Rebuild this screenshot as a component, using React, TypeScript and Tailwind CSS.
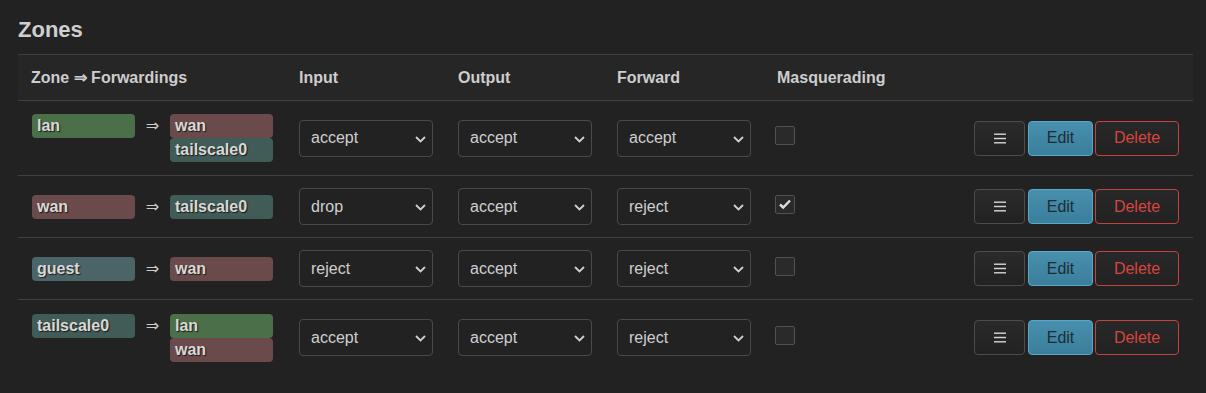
import React from 'react';

type Zone = { name: string };

const badgeColors: Record<string, string> = {
    lan: 'bg-[#4b6f49]',
    wan: 'bg-[#6a4a4a]',
    tailscale0: 'bg-[#415b56]',
    guest: 'bg-[#4a6468]',
};

interface Row {
    zone: string;
    forwards: string[];
    input: string;
    output: string;
    forward: string;
    masq: boolean;
    height: string;
}

const rows: Row[] = [
    { zone: 'lan', forwards: ['wan', 'tailscale0'], input: 'accept', output: 'accept', forward: 'accept', masq: false, height: 'h-[75px]' },
    { zone: 'wan', forwards: ['tailscale0'], input: 'drop', output: 'accept', forward: 'reject', masq: true, height: 'h-[62px]' },
    { zone: 'guest', forwards: ['wan'], input: 'reject', output: 'accept', forward: 'reject', masq: false, height: 'h-[62px]' },
    { zone: 'tailscale0', forwards: ['lan', 'wan'], input: 'accept', output: 'accept', forward: 'reject', masq: false, height: 'h-[75px]' },
];

function Badge({ name }: Zone) {
    return (
        <div
            className={`${badgeColors[name]} w-[103px] h-[24px] rounded-[4px] pl-[5px] text-[16px] leading-[24px] font-bold text-[#d8d8d8] [text-shadow:1px_1px_1px_#1a1a1a]`}
        >
            {name}
        </div>
    );
}

function Select({ value }: { value: string }) {
    return (
        <div className="relative w-[134px] h-[37px]">
            <select
                defaultValue={value}
                className="appearance-none w-full h-full bg-[#222] border border-[#4a4a4a] rounded-[4px] pl-[11px] text-[16px] text-[#cfcfcf] outline-none"
            >
                <option value="accept">accept</option>
                <option value="reject">reject</option>
                <option value="drop">drop</option>
            </select>
            <svg
                className="absolute right-[7px] top-[16px] pointer-events-none"
                width="11"
                height="7"
                viewBox="0 0 11 7"
                fill="none"
            >
                <path d="M1 1l4.5 4.5L10 1" stroke="#cfcfcf" strokeWidth="1.8" />
            </svg>
        </div>
    );
}

function Checkbox({ checked }: { checked: boolean }) {
    return (
        <div className="-ml-[2px] mb-[5px] w-[20px] h-[19px] rounded-[2px] border border-[#525252] bg-[#2a2a2a] flex items-center justify-center">
            {checked && (
                <svg width="14" height="12" viewBox="0 0 14 12" fill="none">
                    <path d="M2 6.5l3.2 3L12 2.5" stroke="#dedede" strokeWidth="2.4" />
                </svg>
            )}
        </div>
    );
}

function Actions() {
    return (
        <div className="flex items-center pr-[14px]">
            <button
                type="button"
                className="w-[51px] h-[35px] mr-[3px] rounded-[4px] border border-[#4c4c4c] bg-gradient-to-b from-[#2a2a2a] to-[#222] flex items-center justify-center"
            >
                <svg width="12" height="11" viewBox="0 0 12 11">
                    <rect x="0" y="0.5" width="12" height="1.4" fill="#d6d6d6" />
                    <rect x="0" y="4.8" width="12" height="1.4" fill="#d6d6d6" />
                    <rect x="0" y="9.1" width="12" height="1.4" fill="#d6d6d6" />
                </svg>
            </button>
            <button
                type="button"
                className="w-[65px] h-[35px] mr-[2px] rounded-[4px] border border-[#56a9cb] bg-gradient-to-b from-[#4890ae] to-[#3a7e9b] text-[16px] text-[#1e2c37]"
            >
                Edit
            </button>
            <button
                type="button"
                className="w-[84px] h-[35px] rounded-[4px] border border-[#c4423f] bg-gradient-to-b from-[#282828] to-[#222] text-[16px] text-[#d9443f]"
            >
                Delete
            </button>
        </div>
    );
}

const gridCols = 'grid grid-cols-[281px_159px_159px_160px_1fr_auto]';

export default function App() {
    return (
        <div className="min-h-[393px] bg-[#222222] px-[18px] pt-[18px] font-['Liberation_Sans',Arial,sans-serif] text-[#cccccc]">
            <h2 className="text-[22px] leading-[24px] font-bold text-[#cfcfcf] mb-[12px]">Zones</h2>

            <div className="w-[1175px]">
                <div className={`${gridCols} h-[47px] items-center bg-[#262626] border-y border-[#404040] text-[16px] font-bold text-[#cdcdcd]`}>
                    <div className="pl-[13px]">Zone ⇒ Forwardings</div>
                    <div>Input</div>
                    <div>Output</div>
                    <div>Forward</div>
                    <div>Masquerading</div>
                    <div />
                </div>

                {rows.map((row, i) => (
                    <div
                        key={row.zone}
                        className={`${gridCols} ${row.height} items-center ${i < rows.length - 1 ? 'border-b border-[#404040]' : ''}`}
                    >
                        <div className="flex items-start pl-[14px]">
                            <Badge name={row.zone} />
                            <div className="w-[35px] h-[24px] flex items-center justify-center text-[16px] text-[#cccccc] font-['DejaVu_Sans',sans-serif]">
                                ⇒
                            </div>
                            <div className="flex flex-col">
                                {row.forwards.map((f) => (
                                    <Badge key={f} name={f} />
                                ))}
                            </div>
                        </div>
                        <div><Select value={row.input} /></div>
                        <div><Select value={row.output} /></div>
                        <div><Select value={row.forward} /></div>
                        <div><Checkbox checked={row.masq} /></div>
                        <Actions />
                    </div>
                ))}
            </div>
        </div>
    );
}
